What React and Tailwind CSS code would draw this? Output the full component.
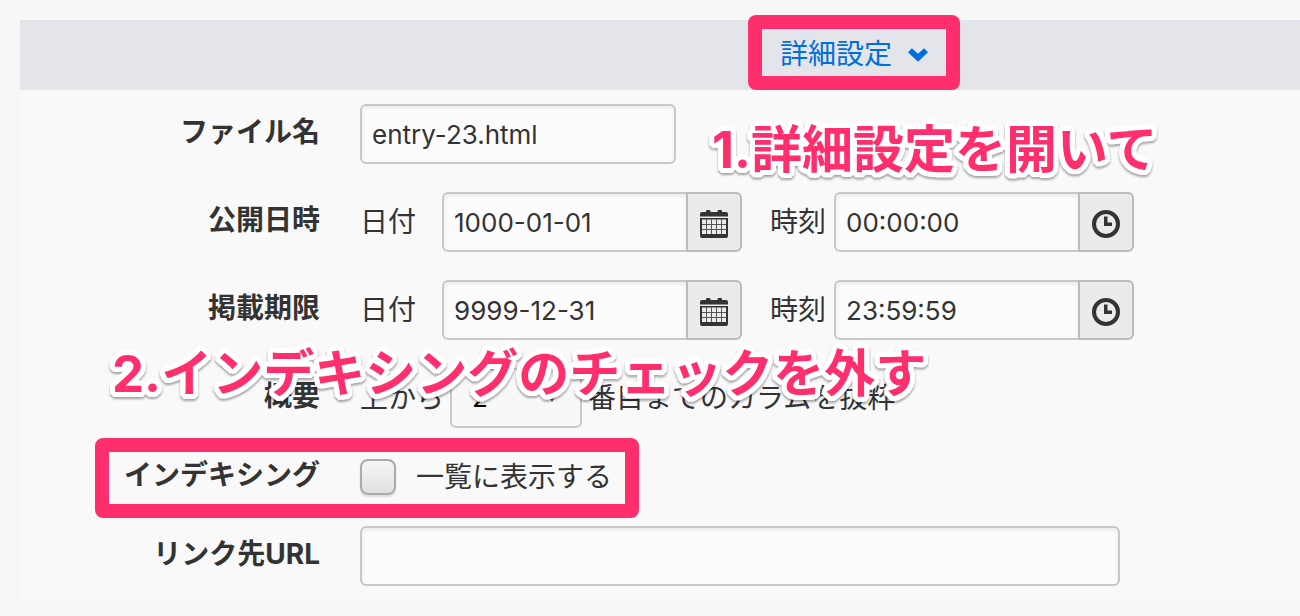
import React from "react";

const inputBox =
  "h-15 min-w-0 border-2 border-[#c8c8c8] bg-[#fcfcfc] px-2.5 text-[26px] text-[#333] shadow-[inset_0_2px_4px_rgba(0,0,0,0.08)] outline-none";

function Row({ label, htmlFor, children, className = "" }) {
  const Label = htmlFor ? "label" : "div";
  return (
    <div className={"relative flex items-center gap-10 " + className}>
      <Label htmlFor={htmlFor} className="w-75 shrink-0 pb-1 text-right font-bold">
        {label}
      </Label>
      {children}
    </div>
  );
}

function ChevronIcon() {
  return (
    <svg width="20" height="14" viewBox="0 0 20 14" fill="currentColor" aria-hidden="true">
      <path d="M3.9 0.2 10 5.8 16.1 0.2 20 4.2 10 13.8 0 4.2Z" />
    </svg>
  );
}

function CalendarIcon() {
  return (
    <svg width="28" height="28" viewBox="0 0 28 28" fill="none" aria-hidden="true">
      <path
        fill="#333"
        d="M2 2H6V1Q6 0 7 0H9.5Q10.5 0 10.5 1V2H17.5V1Q17.5 0 18.5 0H21Q22 0 22 1V2H26Q28 2 28 4V6.5H0V4Q0 2 2 2Z"
      />
      <path fill="#333" fillRule="evenodd" d="M0 8H28V26Q28 28 26 28H2Q0 28 0 26ZM2 9.5V24H26V9.5Z" />
      <path stroke="#555" d="M6.5 9V24M11.5 9V24M16.5 9V24M21.5 9V24M2 14.5H26M2 19.5H26" />
    </svg>
  );
}

function ClockIcon() {
  return (
    <svg width="28" height="28" viewBox="0 0 28 28" fill="none" aria-hidden="true">
      <circle cx="14" cy="14" r="12" stroke="#333" strokeWidth="4" />
      <path fill="#333" d="M12 6.5H15.5V12.5H20V16H12Z" />
    </svg>
  );
}

function AddonField({ id, label, value, buttonLabel, icon }) {
  return (
    <>
      <label htmlFor={id} className="shrink-0">
        {label}
      </label>
      <div className="flex">
        <input id={id} defaultValue={value} className={inputBox + " w-61 rounded-l-md border-r-0"} />
        <button
          type="button"
          aria-label={buttonLabel}
          className="flex h-15 w-14 shrink-0 items-center justify-center rounded-r-md border-2 border-[#bbb] bg-[#ebebeb] pt-1"
        >
          {icon}
        </button>
      </div>
    </>
  );
}

function DateTimeRow({ id, label, date, time }) {
  return (
    <Row label={label}>
      <div className="flex items-center">
        <div className="flex items-center gap-[26px]">
          <AddonField id={id + "-date"} label="日付" value={date} buttonLabel="カレンダー" icon={<CalendarIcon />} />
        </div>
        <div className="ml-7 flex items-center gap-2">
          <AddonField id={id + "-time"} label="時刻" value={time} buttonLabel="時計" icon={<ClockIcon />} />
        </div>
      </div>
    </Row>
  );
}

function Callout({ children, className }) {
  return (
    <p
      className={
        "pointer-events-none absolute z-20 whitespace-nowrap font-[Inter,'Noto_Sans_CJK_JP',sans-serif] text-[51px] leading-15 font-bold text-[#ff2e6c] drop-shadow-[0_2px_1px_rgba(0,0,0,0.35)] [text-shadow:5px_0_0_white,5px_2px_0_white,4px_3px_0_white,3px_4px_0_white,2px_5px_0_white,0_5px_0_white,-2px_5px_0_white,-3px_4px_0_white,-4px_3px_0_white,-5px_2px_0_white,-5px_0_0_white,-5px_-2px_0_white,-4px_-3px_0_white,-3px_-4px_0_white,-2px_-5px_0_white,0_-5px_0_white,2px_-5px_0_white,3px_-4px_0_white,4px_-3px_0_white,5px_-2px_0_white,2px_2px_0_white,-2px_2px_0_white,2px_-2px_0_white,-2px_-2px_0_white] " +
        className
      }
    >
      {children}
    </p>
  );
}

export default function App() {
  return (
    <main className="min-h-screen overflow-hidden bg-[#f7f7f7] pt-5 pb-4 pl-5 font-[Inter,'Noto_Sans_CJK_JP',sans-serif] text-[28px] leading-10 text-[#333]">
      <header className="flex h-[70px] items-center justify-center bg-[#e4e5eb] pl-97">
        <div className="relative">
          <button type="button" className="flex items-center gap-4 text-[#006edc]">
            <span className="pb-0.5">詳細設定</span>
            <ChevronIcon />
          </button>
          <div className="pointer-events-none absolute -inset-x-8 -top-[19px] -bottom-3.5 rounded-lg border-14 border-[#ff2e6c]" />
        </div>
      </header>
      <form className="flex flex-col gap-7 bg-[#f9f9f9] py-3.5">
        <Row label="ファイル名" htmlFor="file-name">
          <input id="file-name" defaultValue="entry-23.html" className={inputBox + " w-79 rounded-md"} />
          <Callout className="top-4 left-[692px]">1.詳細設定を開いて</Callout>
        </Row>
        <DateTimeRow id="publish" label="公開日時" date="1000-01-01" time="00:00:00" />
        <DateTimeRow id="expire" label="掲載期限" date="9999-12-31" time="23:59:59" />
        <Row label="概要" htmlFor="summary">
          <div className="flex items-center gap-1.5">
            <span>上から</span>
            <div className="relative">
              <select
                id="summary"
                className="h-15 w-33 appearance-none rounded-md border-2 border-[#c8c8c8] bg-[#f8f8f8] px-5 text-[26px] text-black"
              >
                <option>2</option>
              </select>
              <svg
                className="pointer-events-none absolute top-6 right-6"
                width="12"
                height="10"
                viewBox="0 0 12 10"
                fill="#555"
                aria-hidden="true"
              >
                <path d="M0 0H12L6 10Z" />
              </svg>
            </div>
            <span>番目までのカラムを抜粋</span>
          </div>
          <Callout className="-top-6 left-[92px]">2.インデキシングのチェックを外す</Callout>
        </Row>
        <Row label="インデキシング" htmlFor="indexing" className="h-[42px]">
          <div className="flex items-center gap-5">
            <input
              id="indexing"
              type="checkbox"
              className="size-9 appearance-none rounded-lg border-2 border-[#aaa] bg-linear-to-b from-[#f6f6f6] to-[#e0e0e0] shadow-[0_2px_2px_rgba(0,0,0,0.12)]"
            />
            <label htmlFor="indexing">一覧に表示する</label>
          </div>
          <div className="pointer-events-none absolute -top-[18px] left-[75px] h-20 w-136 rounded-lg border-14 border-[#ff2e6c]" />
        </Row>
        <Row label="リンク先URL" htmlFor="link-url">
          <input id="link-url" className={inputBox + " w-190 rounded-md"} />
        </Row>
      </form>
    </main>
  );
}
